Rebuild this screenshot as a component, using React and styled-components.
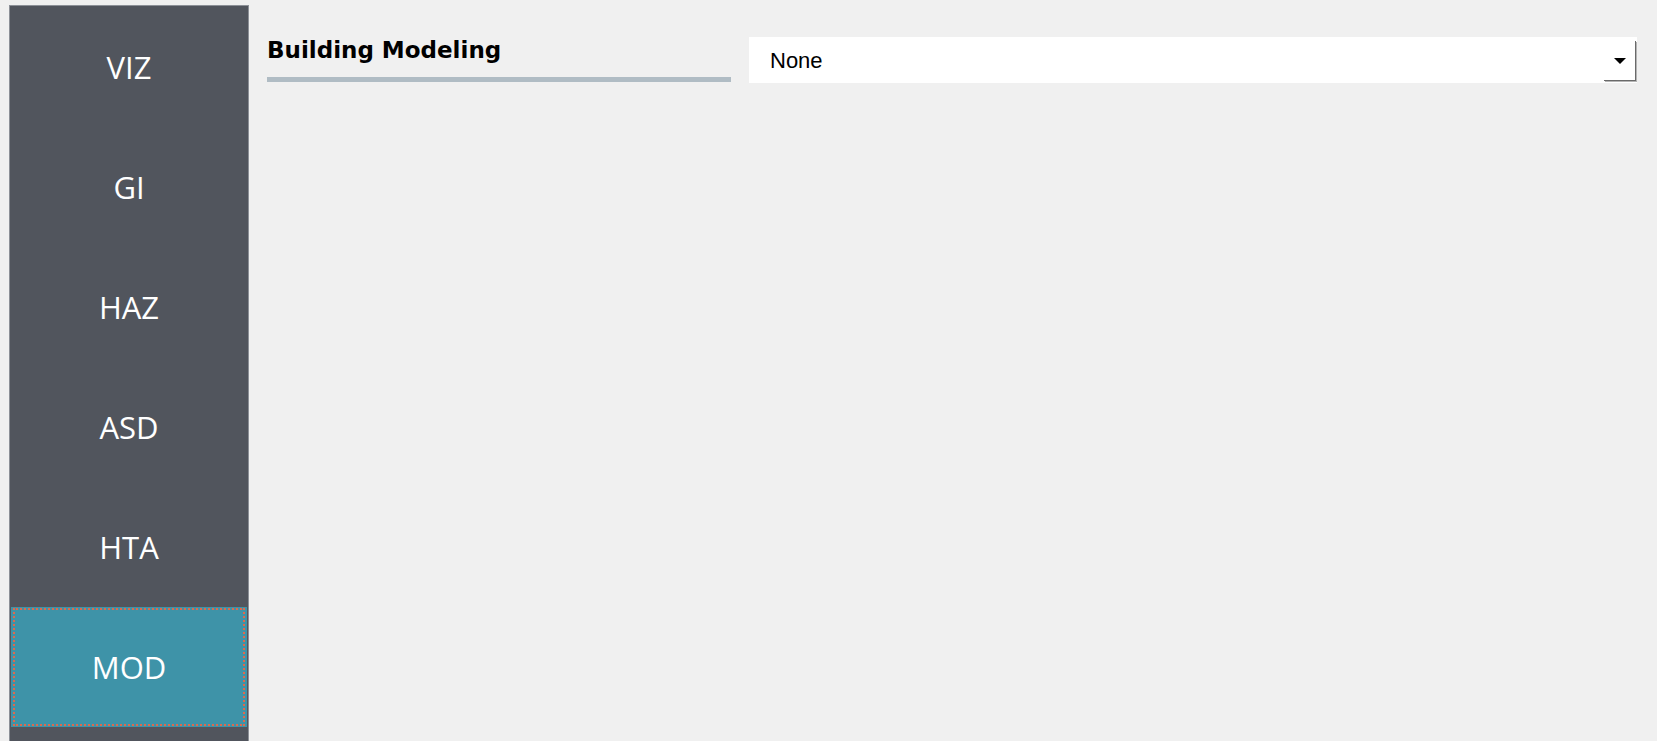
import styled, { createGlobalStyle } from 'styled-components';

const GlobalStyle = createGlobalStyle`
	html, body {
		margin: 0;
		padding: 0;
		background: #f0f0f0;
	}
	* {
		box-sizing: border-box;
	}
`;

const Page = styled.div`
	display: flex;
	height: 100vh;
	padding: 5px 20px 0 9px;
	overflow: hidden;
	background: #f0f0f0;
`;

const Sidebar = styled.nav`
	display: flex;
	flex-direction: column;
	width: 240px;
	flex-shrink: 0;
	padding: 1px 1px 0 1px;
	background: #51555d;
	border: 1px solid #8c9097;
	border-bottom: none;
`;

const NavButton = styled.div`
	position: relative;
	display: flex;
	align-items: center;
	justify-content: center;
	height: 120px;
	flex-shrink: 0;
	font-family: 'Open Sans', 'Noto Sans', sans-serif;
	font-size: 31px;
	color: #ffffff;
	background: ${(props) => (props.active ? '#3e93a8' : 'transparent')};

	&::after {
		content: '';
		display: ${(props) => (props.active ? 'block' : 'none')};
		position: absolute;
		inset: 1px 2px 1px 2px;
		border: 2px dotted #dc6a4e;
	}
`;

const Main = styled.main`
	flex: 1;
	display: flex;
	align-items: flex-start;
	gap: 18px;
	padding: 30px 0 0 18px;
`;

const Heading = styled.div`
	width: 464px;
	flex-shrink: 0;
`;

const Title = styled.h2`
	margin: 0;
	padding-top: 2px;
	font-family: 'DejaVu Sans', Verdana, sans-serif;
	font-weight: bold;
	font-size: 23px;
	line-height: 26px;
	color: #000000;
`;

const Rule = styled.div`
	height: 5px;
	margin-top: 14px;
	background: #b0bcc4;
`;

const Select = styled.div`
	flex: 1;
	display: flex;
	align-items: flex-end;
	height: 46px;
	margin-top: 2px;
	background: #ffffff;
`;

const Value = styled.span`
	flex: 1;
	align-self: center;
	padding-left: 21px;
	padding-top: 2px;
	font-family: 'Liberation Sans', Arial, sans-serif;
	font-size: 22px;
	color: #000000;
`;

const Toggle = styled.div`
	display: flex;
	align-items: center;
	justify-content: center;
	width: 32px;
	height: 40px;
	margin: 0 1px 2px 0;
	border-right: 1px solid #6a6a6a;
	border-bottom: 1px solid #6a6a6a;
	box-shadow: 1px 1px 0 #b4b4b4;
`;

const items = ['VIZ', 'GI', 'HAZ', 'ASD', 'HTA', 'MOD'];

export default function App() {
	return (
		<>
			<GlobalStyle />
			<Page>
				<Sidebar>
					{items.map((name) => (
						<NavButton key={name} active={name === 'MOD'}>
							{name}
						</NavButton>
					))}
				</Sidebar>
				<Main>
					<Heading>
						<Title>Building Modeling</Title>
						<Rule />
					</Heading>
					<Select>
						<Value>None</Value>
						<Toggle>
							<svg width="12" height="6" viewBox="0 0 12 6">
								<path d="M0 0 H12 L6 6 Z" fill="#000" />
							</svg>
						</Toggle>
					</Select>
				</Main>
			</Page>
		</>
	);
}
